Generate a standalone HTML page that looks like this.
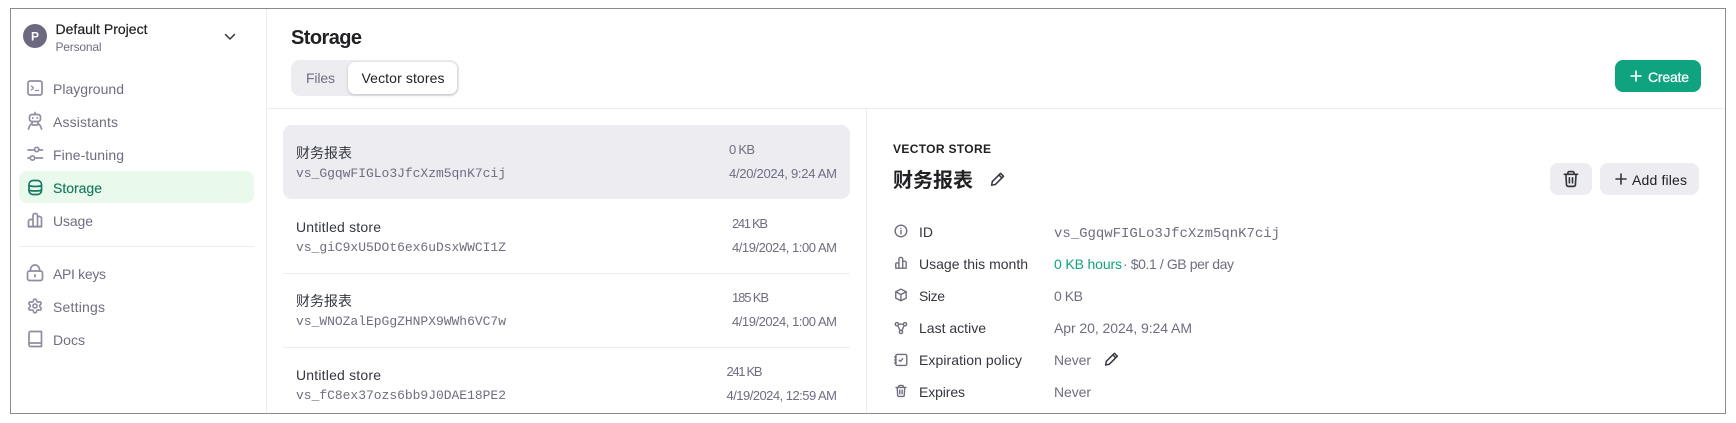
<!DOCTYPE html>
<html lang="en">
<head>
<meta charset="utf-8">
<title>Storage</title>
<style>
html,body{margin:0;padding:0;background:#fff;width:1736px;height:423px;overflow:hidden}
svg{display:block}
text{font-family:"Liberation Sans","Noto Sans CJK SC",sans-serif;font-size:14px;fill:#353740}
.nav{fill:#6e6e80}
.mono{font-family:"Liberation Mono",monospace;font-size:13px;fill:#6e6e80}
.meta{font-size:13px;fill:#6e6e80}
.val{fill:#6e6e80}
.ic{fill:none;stroke:#8e8ea0;stroke-width:1.7;stroke-linecap:round;stroke-linejoin:round}
.ic2{fill:none;stroke:#6e6e80;stroke-width:2.4;stroke-linecap:round;stroke-linejoin:round}
.dk{fill:none;stroke:#353740;stroke-width:2.3;stroke-linecap:round;stroke-linejoin:round}
.ln{stroke:#ececf1;stroke-width:1;shape-rendering:crispEdges}
</style>
</head>
<body>
<svg width="1736" height="423" viewBox="0 0 1736 423" xmlns="http://www.w3.org/2000/svg">
<rect width="1736" height="423" fill="#fff"/>

<!-- sidebar -->
<line class="ln" x1="266.5" y1="9" x2="266.5" y2="413"/>
<circle cx="35" cy="36" r="12" fill="#6b6880"/>
<text x="35" y="40.5" text-anchor="middle" style="font-size:12px;font-weight:700;fill:#fff">P</text>
<text x="55.5" y="34" textLength="92" style="fill:#202123;stroke:#202123;stroke-width:.2">Default Project</text>
<text x="55.5" y="51" textLength="46" style="font-size:12px;fill:#6e6e80">Personal</text>
<path d="M225.5 34.5l4.500 4.500 4.500-4.500" fill="none" stroke="#353740" stroke-width="1.5" stroke-linecap="round" stroke-linejoin="round"/>

<rect x="19" y="171" width="235" height="32" rx="8" fill="#e9f9ec"/>
<text class="nav" x="53" y="94" textLength="71">Playground</text>
<text class="nav" x="53" y="127" textLength="65">Assistants</text>
<text class="nav" x="53" y="160" textLength="71">Fine-tuning</text>
<text x="53" y="193" textLength="49" style="fill:#187a62;stroke:#187a62;stroke-width:.15">Storage</text>
<text class="nav" x="53" y="226" textLength="40">Usage</text>
<line class="ln" x1="19" y1="246.5" x2="254" y2="246.5"/>
<text class="nav" x="53" y="279" textLength="53">API keys</text>
<text class="nav" x="53" y="312" textLength="52">Settings</text>
<text class="nav" x="53" y="345" textLength="32">Docs</text>

<!-- playground -->
<g class="ic"><rect x="28" y="81" width="14" height="14" rx="2"/><path d="M31.500 86l2 2-2 2M35.500 90.500h3" stroke-width="1.300"/></g>
<!-- assistants -->
<g class="ic"><rect x="29.500" y="114.500" width="11" height="7" rx="2.500"/><path d="M35 112.500v2M32.800 117.800v.4M37.200 117.800v.4M32.500 122c0 2-3.500 2.500-4 7M37.500 122c0 2 3.500 2.500 4 7M32.500 125h5"/></g>
<!-- fine tuning -->
<g class="ic" stroke-width="1.500"><path d="M28 150h6.500M39 150h3.500M28 158h2M35 158h7.500"/><circle cx="36.700" cy="149.500" r="2.200"/><circle cx="32.500" cy="158" r="2.200"/></g>
<!-- storage -->
<g class="ic" style="stroke:#187a62"><rect x="29" y="180.500" width="12.500" height="14" rx="4"/><path d="M29 185.500c2 1.300 10.500 1.300 12.500 0M29 190c2 1.300 10.500 1.300 12.500 0"/></g>
<!-- usage -->
<g class="ic"><path d="M28.500 226.500v-5a2 2 0 012-2h2.500v7zM33 226.500V215.500a2 2 0 012-2h.500a2 2 0 012 2v11zM37.500 226.500V216.500h2a2 2 0 012 2v8zM28.500 226.800h13"/></g>
<!-- api keys -->
<g class="ic"><rect x="27.500" y="271" width="15" height="9.500" rx="2"/><path d="M30.500 271v-1.500a4.500 4.500 0 019 0V271M35 274.800v2"/></g>
<!-- settings -->
<g transform="translate(26.800,297.800) scale(.683)" class="ic" style="stroke-width:2.400"><path d="M12.220 2h-.44a2 2 0 0 0-2 2v.18a2 2 0 0 1-1 1.730l-.43.25a2 2 0 0 1-2 0l-.15-.08a2 2 0 0 0-2.730.73l-.22.38a2 2 0 0 0 .73 2.730l.15.1a2 2 0 0 1 1 1.720v.51a2 2 0 0 1-1 1.740l-.15.09a2 2 0 0 0-.73 2.730l.22.38a2 2 0 0 0 2.730.73l.15-.08a2 2 0 0 1 2 0l.43.25a2 2 0 0 1 1 1.730V20a2 2 0 0 0 2 2h.44a2 2 0 0 0 2-2v-.18a2 2 0 0 1 1-1.730l.43-.25a2 2 0 0 1 2 0l.15.08a2 2 0 0 0 2.730-.73l.22-.39a2 2 0 0 0-.73-2.730l-.15-.08a2 2 0 0 1-1-1.740v-.5a2 2 0 0 1 1-1.740l.15-.09a2 2 0 0 0 .73-2.730l-.22-.38a2 2 0 0 0-2.730-.73l-.15.08a2 2 0 0 1-2 0l-.43-.25a2 2 0 0 1-1-1.730V4a2 2 0 0 0-2-2z"/><circle cx="12" cy="12" r="3"/></g>
<!-- docs -->
<g class="ic"><path d="M29 343.500V333a1.500 1.500 0 011.500-1.500h11v15h-11a1.500 1.500 0 01-1.500-1.500zM29 343h12.500"/></g>

<!-- header -->
<text x="291" y="44" textLength="71" style="font-size:20px;font-weight:700;fill:#202123">Storage</text>
<rect x="291" y="60" width="168" height="36" rx="9" fill="#ececf1"/>
<rect x="348" y="62" width="109" height="32" rx="7" fill="#fff" style="filter:drop-shadow(0 1px 1.500px rgba(0,0,0,.18))"/>
<text class="nav" x="306" y="83" textLength="29">Files</text>
<text x="361.500" y="83" textLength="83" style="fill:#202123">Vector stores</text>

<rect x="1615" y="60" width="86" height="32" rx="8" fill="#10a37f"/>
<path d="M1636 71v10M1631 76h10" stroke="#fff" stroke-width="1.600" stroke-linecap="round"/>
<text x="1648" y="82" textLength="41" style="fill:#fff;stroke:#fff;stroke-width:.25">Create</text>

<line class="ln" x1="267" y1="108.500" x2="1725" y2="108.500"/>
<line class="ln" x1="866.500" y1="109" x2="866.500" y2="413"/>

<!-- list -->
<rect x="283" y="125" width="567" height="74" rx="9" fill="#ececf1"/>
<text x="296" y="158" textLength="56">财务报表</text>
<text class="mono" x="296" y="177" textLength="210">vs_GgqwFIGLo3JfcXzm5qnK7cij</text>
<text class="meta" x="729" y="154" textLength="26">0 KB</text>
<text class="meta" x="729" y="178" textLength="108">4/20/2024, 9:24 AM</text>

<text x="296" y="232" textLength="85" style="fill:#353740">Untitled store</text>
<text class="mono" x="296" y="251" textLength="210">vs_giC9xU5DOt6ex6uDsxWWCI1Z</text>
<text class="meta" x="732" y="228" textLength="36">241 KB</text>
<text class="meta" x="732" y="252" textLength="105">4/19/2024, 1:00 AM</text>
<line class="ln" x1="283" y1="273.500" x2="850" y2="273.500"/>

<text x="296" y="306" textLength="56">财务报表</text>
<text class="mono" x="296" y="325" textLength="210">vs_WNOZalEpGgZHNPX9WWh6VC7w</text>
<text class="meta" x="732" y="302" textLength="37">185 KB</text>
<text class="meta" x="732" y="326" textLength="105">4/19/2024, 1:00 AM</text>
<line class="ln" x1="283" y1="347.500" x2="850" y2="347.500"/>

<text x="296" y="380" textLength="85" style="fill:#353740">Untitled store</text>
<text class="mono" x="296" y="399" textLength="210">vs_fC8ex37ozs6bb9J0DAE18PE2</text>
<text class="meta" x="726.500" y="376" textLength="36">241 KB</text>
<text class="meta" x="726.500" y="400" textLength="110.500">4/19/2024, 12:59 AM</text>

<!-- detail -->
<text x="893" y="153" textLength="98" style="font-size:12px;font-weight:700;fill:#202123">VECTOR STORE</text>
<text x="893" y="187" textLength="80" style="font-size:20px;font-weight:700;fill:#202123">财务报表</text>
<g transform="translate(990,171) scale(.66)" class="dk"><path d="M16 3.500l4.500 4.500L8 20.500l-5.500 1 1-5.500zM13.500 6l4.500 4.500"/></g>

<rect x="1550" y="163" width="42" height="32" rx="8" fill="#ececf1"/>
<g transform="translate(1561.600,169.600) scale(.78)" class="dk" style="stroke-width:2.100"><path d="M3.500 6h17M8 6V4.500A2 2 0 0110 2.500h4a2 2 0 012 2V6M5.500 6l.8 13.500a2 2 0 002 2h7.400a2 2 0 002-2L18.500 6M10 10.500v6.500M14 10.500v6.500"/></g>
<rect x="1600" y="163" width="99" height="32" rx="8" fill="#ececf1"/>
<path d="M1621 174v10M1616 179h10" stroke="#353740" stroke-width="1.600" stroke-linecap="round"/>
<text x="1632" y="185" textLength="55" style="fill:#202123">Add files</text>

<!-- rows -->
<g transform="translate(894,224) scale(.58)" class="ic2"><circle cx="12" cy="12" r="10"/><path d="M12 11v6M12 7.500v.1"/></g>
<text x="919" y="237" textLength="14">ID</text>
<text class="mono" x="1054" y="237" textLength="226" style="font-size:14px">vs_GgqwFIGLo3JfcXzm5qnK7cij</text>

<g transform="translate(894,256) scale(.58)" class="ic2"><path d="M3 21v-7a2 2 0 012-2h3.500V21zM8.500 21V5a2.500 2.500 0 012.500-2.500h1.500A2.500 2.500 0 0115 5v16zM15 21V9h3.500a2.500 2.500 0 012.500 2.500V21zM3 21h18"/></g>
<text x="919" y="269" textLength="109">Usage this month</text>
<text x="1054" y="269" textLength="68" style="fill:#10a37f">0 KB hours</text>
<text class="val" x="1123" y="269" textLength="111">· $0.1 / GB per day</text>

<g transform="translate(894,288) scale(.58)" class="ic2"><path d="M12 2l9 4.500v11L12 22l-9-4.500v-11zM3 6.500l9 5 9-5M12 11.500V22"/></g>
<text x="919" y="301" textLength="26">Size</text>
<text class="val" x="1054" y="301" textLength="29">0 KB</text>

<g transform="translate(894,321) scale(.58)" class="ic2"><circle cx="5" cy="5.500" r="2.800"/><circle cx="19" cy="5.500" r="2.800"/><circle cx="12" cy="19" r="2.800"/><path d="M8 5.500h8M6.500 8l4 8.500M17.500 8l-4 8.500"/></g>
<text x="919" y="333" textLength="67">Last active</text>
<text class="val" x="1054" y="333" textLength="138">Apr 20, 2024, 9:24 AM</text>

<g transform="translate(894,353) scale(.58)" class="ic2"><rect x="3" y="2.500" width="19" height="19" rx="2.500"/><path d="M9 12.500l2 2 4-4.500M1 7h3M1 12h3M1 17h3"/></g>
<text x="919" y="365" textLength="103">Expiration policy</text>
<text class="val" x="1054" y="365" textLength="37">Never</text>
<g transform="translate(1104,351) scale(.65)" class="dk"><path d="M16 3.500l4.500 4.500L8 20.500l-5.500 1 1-5.500zM13.500 6l4.500 4.500"/></g>

<g transform="translate(894,384) scale(.58)" class="ic2"><path d="M3.500 6h17M8 6V4.500A2 2 0 0110 2.500h4a2 2 0 012 2V6M5.500 6l.8 13.500a2 2 0 002 2h7.400a2 2 0 002-2L18.500 6M10 10.500v6.500M14 10.500v6.500"/></g>
<text x="919" y="397" textLength="46">Expires</text>
<text class="val" x="1054" y="397" textLength="37">Never</text>

<!-- outer frame -->
<rect x="10.500" y="8.500" width="1715" height="405" fill="none" stroke="#8a8a8a" stroke-width="1" shape-rendering="crispEdges"/>
</svg>
</body>
</html>
